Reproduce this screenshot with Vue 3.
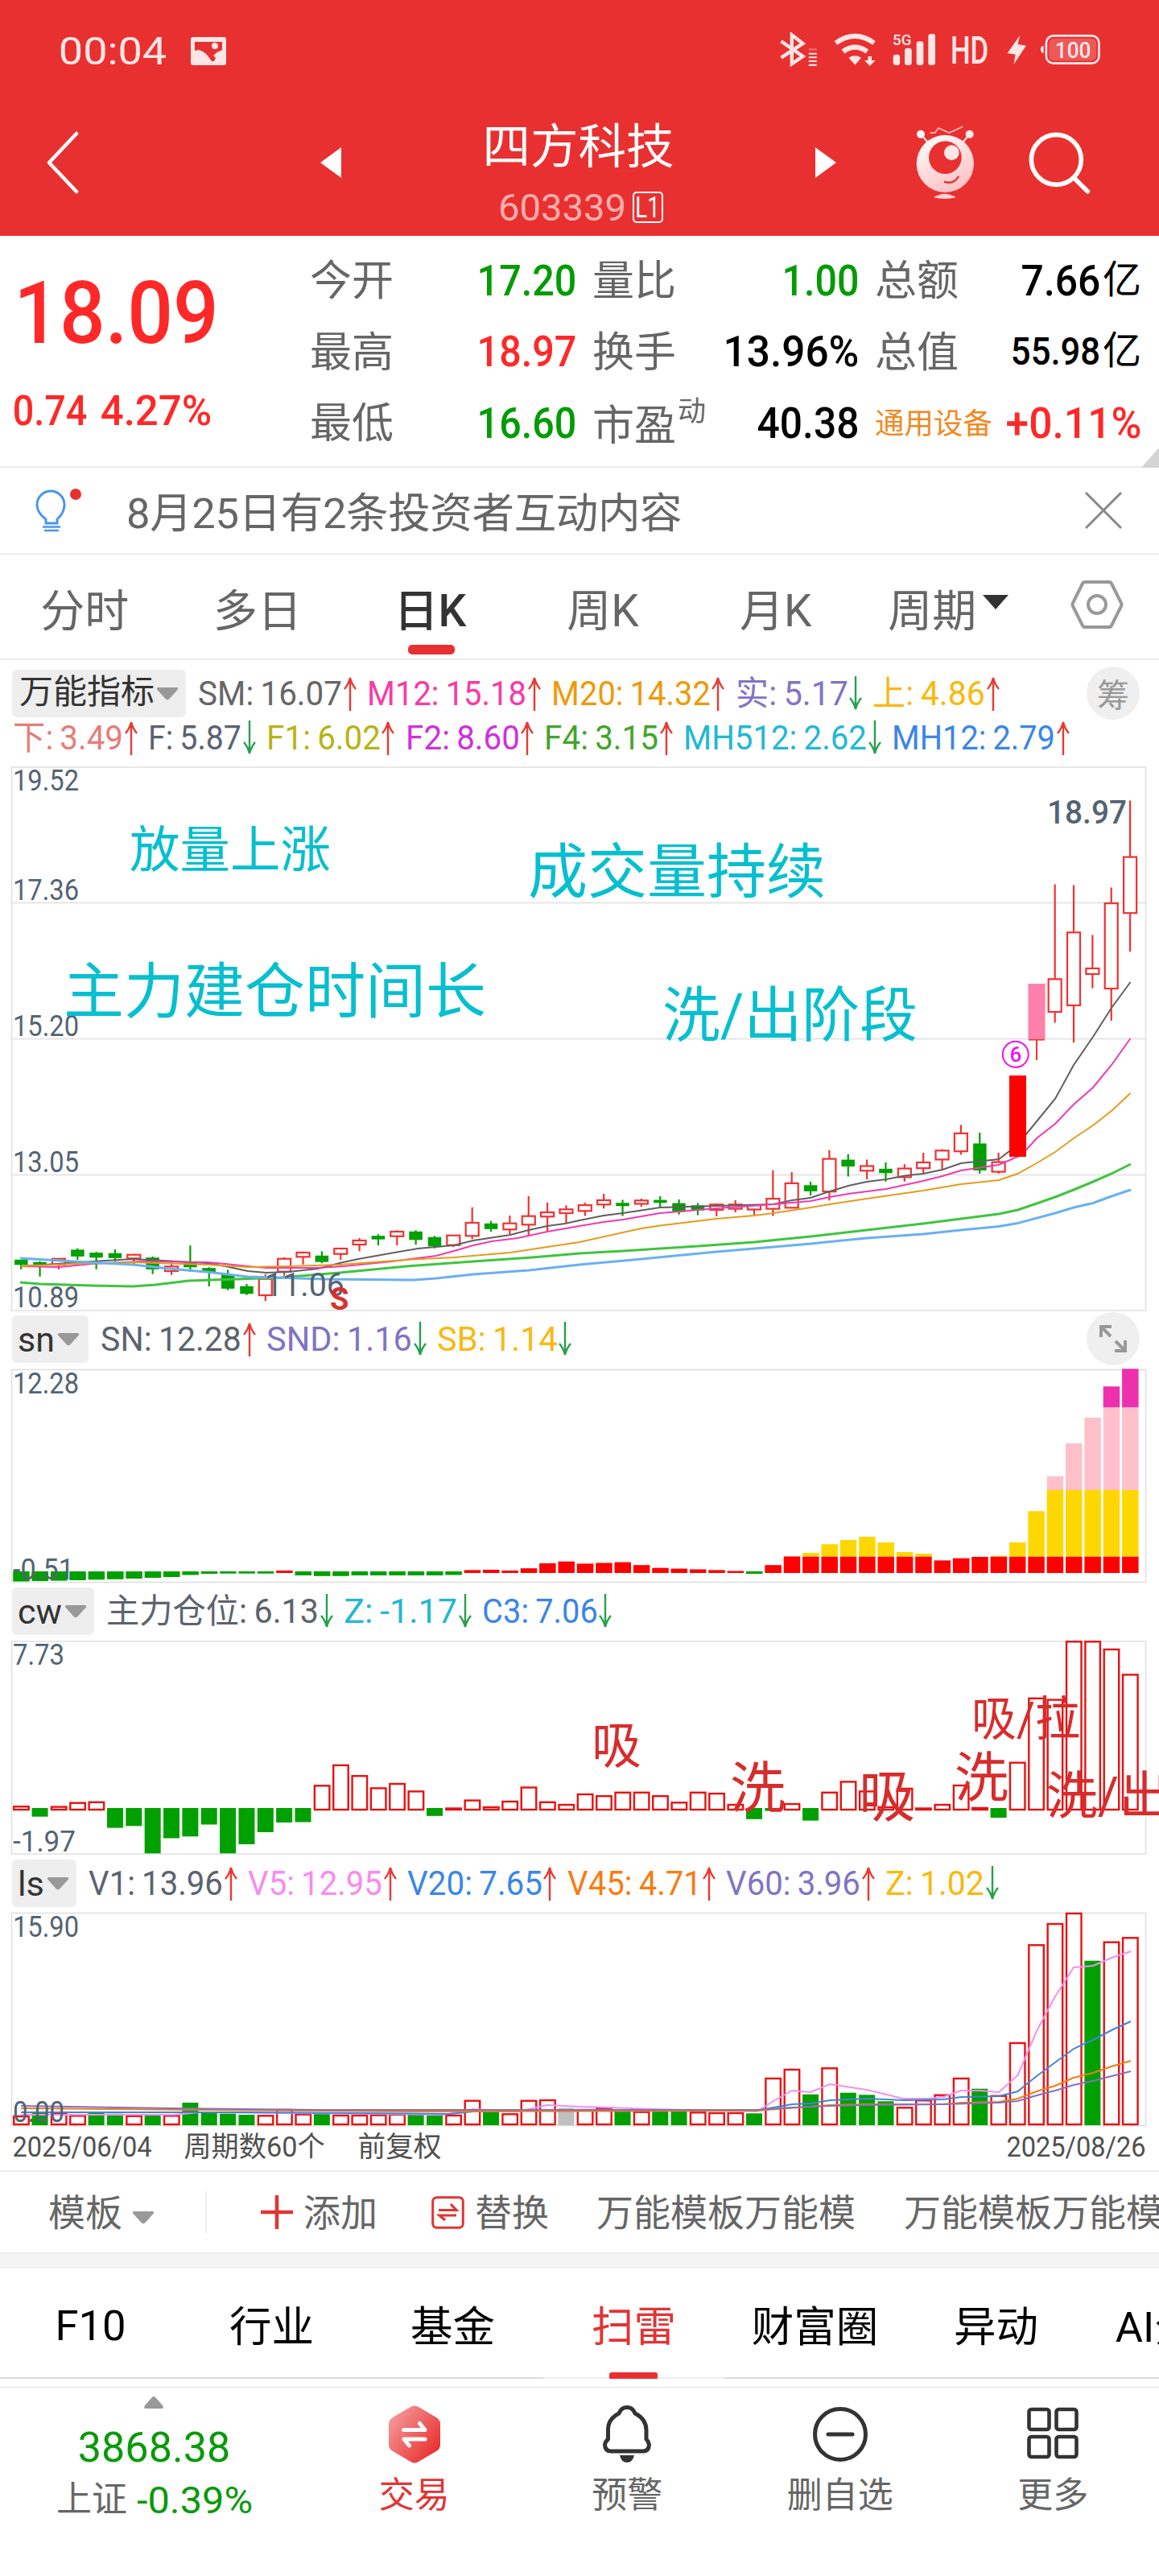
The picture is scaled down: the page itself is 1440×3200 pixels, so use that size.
<script setup>
import { h } from 'vue'

// Single-line label stretched to a fixed width; its box is exactly cap-height tall.
const Fit = ({ t, w, s, b = 400, cap = 0.711 }) =>
  h('svg', { width: w, height: s * cap, style: 'overflow:visible;display:block;flex:none' }, [
    h('text', {
      x: -0.045 * s, y: s * cap, 'font-size': s, 'font-weight': b, fill: 'currentColor',
      textLength: w + 0.09 * s, lengthAdjust: 'spacingAndGlyphs'
    }, t)
  ])
Fit.props = ['t', 'w', 's', 'b', 'cap']

const Caret = () =>
  h('svg', { width: 28, height: 17, viewBox: '0 0 28 17', style: 'display:block;flex:none' }, [
    h('path', { d: 'M2 1 H26 Q28 2 26.500 4 L16 15.500 Q14 17 12 15.500 L1.500 4 Q0 2 2 1Z', fill: '#999' })
  ])

const Arrow = ({ up }) =>
  h('svg', { width: 18, height: 43, viewBox: '0 0 18 43', style: 'display:block;flex:none' }, [
    h('path', {
      d: up ? 'M9 43 V2 M2 16 Q7 10 9 2 Q11 10 16 16' : 'M9 0 V41 M2 27 Q7 33 9 41 Q11 33 16 27',
      fill: 'none', stroke: up ? '#e63a35' : '#26a04c', 'stroke-width': 2.4
    })
  ])
Arrow.props = ['up']

const quotes = [
  { k: '今开', v: '17.20', w: 119, c: 'g' }, { k: '量比', v: '1.00', w: 91, c: 'g' }, { k: '总额', v: '7.66', w: 94, c: 'k', u: '亿' },
  { k: '最高', v: '18.97', w: 119, c: 'r' }, { k: '换手', v: '13.96%', w: 164, c: 'k' }, { k: '总值', v: '55.98', w: 107, c: 'k', u: '亿', s: 48 },
  { k: '最低', v: '16.60', w: 119, c: 'g' }, { k: '市盈', sup: '动', v: '40.38', w: 122, c: 'k' }, { k: '通用设备', v: '+0.11%', w: 164, c: 'r', hot: true }
]

// Indicator readouts: a thin space separates the name from its value
const gap = (list) => list.map((l) => ({ ...l, t: l.t.replace(': ', ':\u2009') }))
const legendA = gap([
  { t: 'SM: 16.07', w: 175, c: '#666', up: true }, { t: 'M12: 15.18', w: 194, c: '#f73aa8', up: true },
  { t: 'M20: 14.32', w: 194, c: '#ee9a0a', up: true }, { t: '实: 5.17', w: 136, c: '#8074c4' }, { t: '上: 4.86', w: 136, c: '#f9b90f', up: true }
])
const legendB = gap([
  { t: '下: 3.49', w: 133, c: '#e57d7a', up: true }, { t: 'F: 5.87', w: 112, c: '#5a6270' },
  { t: 'F1: 6.02', w: 138, c: '#b8b315', up: true }, { t: 'F2: 8.60', w: 138, c: '#cf30dc', up: true },
  { t: 'F4: 3.15', w: 138, c: '#43a52a', up: true }, { t: 'MH512: 2.62', w: 224, c: '#22b8d4' }, { t: 'MH12: 2.79', w: 199, c: '#3a86e8', up: true }
])
const legendSn = gap([
  { t: 'SN: 12.28', w: 171, c: '#5c636e', up: true }, { t: 'SND: 1.16', w: 177, c: '#8074c4' }, { t: 'SB: 1.14', w: 146, c: '#f9b90f' }
])
const legendCw = gap([
  { t: '主力仓位: 6.13', w: 260, c: '#5c636e' }, { t: 'Z: -1.17', w: 137, c: '#22b8d4' }, { t: 'C3: 7.06', w: 140, c: '#3a86e8' }
])
const legendLs = gap([
  { t: 'V1: 13.96', w: 163, c: '#5c636e', up: true }, { t: 'V5: 12.95', w: 163, c: '#f98bef', up: true },
  { t: 'V20: 7.65', w: 164, c: '#3a86e8', up: true }, { t: 'V45: 4.71', w: 163, c: '#f97b10', up: true },
  { t: 'V60: 3.96', w: 163, c: '#8074c4', up: true }, { t: 'Z: 1.02', w: 119, c: '#f9b90f' }
])

const cx = (i) => 26.2 + 23.354 * i

// Candles: [rising, high, body top, body bottom, low]
const candles = [
  [0, 1565, 1565, 1571, 1576.7], [0, 1566.7, 1568, 1570.7, 1585.7], [1, 1563.3, 1563.7, 1571, 1576.7], [0, 1550.7, 1552.7, 1560.7, 1565],
  [0, 1555, 1556.3, 1562, 1576.7], [0, 1552, 1557, 1562.7, 1566.7], [1, 1557.7, 1558.7, 1563.3, 1570.7], [0, 1560.7, 1562.3, 1576.7, 1582.7],
  [1, 1566.7, 1573.3, 1579, 1583.7], [0, 1547.3, 1568.7, 1574, 1580], [0, 1574, 1575.3, 1580.7, 1598], [0, 1577.3, 1583.3, 1600.7, 1602.7],
  [0, 1595, 1598, 1607, 1608.7], [1, 1582.7, 1588.7, 1609, 1616], [1, 1562, 1563.7, 1579.7, 1584.7], [1, 1554.7, 1556, 1561.3, 1570.7],
  [0, 1554.3, 1560, 1567.3, 1569.3], [1, 1550, 1551, 1557.7, 1565], [1, 1538, 1541, 1546, 1554.3], [0, 1533.3, 1535.3, 1539.3, 1547],
  [1, 1528.3, 1530, 1535.7, 1547], [0, 1528.3, 1530, 1540, 1546.3], [0, 1535.3, 1537, 1548, 1550.7], [1, 1534.3, 1534.7, 1546.7, 1549.3],
  [1, 1499.7, 1519, 1535.3, 1539.3], [0, 1516.7, 1520, 1526.7, 1530], [1, 1510, 1519.7, 1527.3, 1533.3], [1, 1486, 1510.7, 1521.3, 1534],
  [1, 1494, 1506, 1511.3, 1529.3], [1, 1497.3, 1502.3, 1507, 1519.3], [1, 1494, 1497.1, 1504.3, 1510.5], [1, 1482.9, 1490.9, 1496.3, 1501.2],
  [0, 1490.4, 1494.5, 1498, 1510.5], [1, 1489.1, 1491.3, 1495.4, 1498.9], [0, 1486, 1490.9, 1494, 1500.3], [0, 1490, 1494.9, 1505.2, 1508.8],
  [0, 1494.5, 1497.6, 1503.4, 1509.6], [1, 1494.9, 1496.3, 1502.9, 1511], [1, 1490.9, 1496.3, 1501.6, 1506.1], [1, 1496.3, 1497.1, 1502.5, 1509.2],
  [1, 1453.8, 1489.1, 1501.6, 1510.5], [1, 1456.1, 1469.9, 1500.3, 1500.3], [0, 1468.1, 1472.6, 1479.7, 1485.1], [1, 1428.8, 1439.6, 1480.2, 1491.3],
  [0, 1433.8, 1440.9, 1448.9, 1461.4], [1, 1440.4, 1448.5, 1454.3, 1465], [0, 1444, 1452.1, 1457, 1467.7], [1, 1446.3, 1451.6, 1462.3, 1467.7],
  [1, 1432, 1444, 1451.2, 1457], [1, 1427.5, 1429.3, 1440.4, 1453], [1, 1397.6, 1407.9, 1430.2, 1434.6], [0, 1407, 1420.8, 1453.8, 1457.9],
  [1, 1432, 1443.6, 1455.6, 1457.9], [2, 1336, 1336, 1436.5, 1436.5], [3, 1222, 1222, 1290.5, 1316.8], [1, 1098.5, 1216.3, 1257, 1270.4],
  [1, 1099.4, 1158.3, 1248.9, 1294.9], [1, 1161.4, 1203, 1210, 1227.5], [1, 1102.5, 1122.1, 1228, 1268.1], [1, 994.5, 1064.6, 1134.2, 1182]
].map(([k, hi, t, b, lo], i) => ({ k, hi, t, b, lo, x: cx(i) }))

const mainLines = [
  { c: '#606060', w: 2, p: '26,1573 115,1567 165,1564 202,1566 257,1569 280,1573 308,1579 331,1581 358,1580 395,1576 422,1569 445,1564 519,1551 564,1547 588,1541 634,1534 657,1528 680,1523 702,1520 720,1516 750,1510 774,1507 820,1500 890,1498 961,1496 984,1491 1007,1488 1031,1480 1054,1473 1077,1468 1101,1465 1124,1460.5 1147,1458 1171,1453 1194,1445 1241,1440 1264.5,1422 1288,1393 1311,1365 1334,1323 1358,1288 1381,1252 1404.500,1220' },
  { c: '#f03ab0', w: 2, p: '26,1573 73,1574 115,1570 174,1567 257,1568 280,1570 308,1573 331,1575 395,1575 427,1573 487,1567 542,1560 564,1554 588,1547 611,1542 643,1538 680,1530 720,1523 750,1518 774,1515 797,1511 820,1507 890,1501 961,1496 1007,1492 1031,1487 1054,1483 1101,1477 1124,1472 1147,1467 1171,1461 1194,1454 1241,1447 1269,1435 1288,1414 1311,1396 1334,1372 1358,1351 1381,1323 1404.500,1290' },
  { c: '#e59c1c', w: 2, p: '26,1573 92,1570 165,1568 257,1571 308,1574 358,1573 422,1571 505,1565 564,1562 634,1556 680,1549 720,1543 774,1531 797,1526 820,1522.6 890,1514 937,1510 961,1507 1007,1500 1031,1496 1077,1489 1147,1479 1194,1471 1241,1466 1264.5,1458 1288,1445 1311,1431 1334,1414 1358,1398 1381,1380 1404.500,1358' },
  { c: '#3fc43f', w: 3, p: '25,1593 50,1595 115,1597 165,1598 193,1596 234,1591 294,1589 349,1587 422,1581 505,1573 588,1567 661,1562 720,1557 774,1554 820,1551 867,1548 937,1543 1007,1536 1077,1528 1147,1520 1194,1514 1241,1508 1264.5,1503 1288,1495 1311,1487 1334,1478 1358,1468 1381,1458 1405,1446' },
  { c: '#6ab0f2', w: 3, p: '25,1563 92,1567 165,1571 211,1576 257,1580 308,1586 340,1587 404,1589 514,1590 542,1588 588,1583 657,1578 720,1571 797,1564 890,1555 961,1549 1007,1545 1077,1538 1147,1533 1194,1528 1241,1523.5 1264.5,1519.5 1311,1507 1334,1500 1358,1494.5 1381,1486 1405,1478' }
]
const axis = [['19.52', 982], ['17.36', 1117.5], ['15.20', 1287], ['13.05', 1455.5], ['10.89', 1624]]
const notes = [
  { t: '放量上涨', x: 161, y: 1078, s: 62.5, w: 250 }, { t: '成交量持续', x: 656, y: 1109, s: 74, w: 370 },
  { t: '主力建仓时间长', x: 79, y: 1258, s: 75, w: 525 }, { t: '洗/出阶段', x: 823, y: 1287, s: 73.5, w: 317 }
]

// Stacked bars: each tier is capped at a fixed level
const tiers = [[0, 20.5, '#ff0000'], [20.5, 103, '#ffd700'], [103, 205.8, '#ffc0cb'], [205.8, 999, '#ee2fae']]
const sn = [
  -12.5, -12, -11.6, -11, -10.3, -9.8, -9, -8, -7, -4.5, -3, -2.7, -2.7, -2.7, 3, -5, -5.8, -5.8, -5, -5, -5, -5, -5, -4.5, 3.6, 4, 3, 5.8, 12, 14.3,
  11.6, 12.5, 13.4, 9.8, 6.3, 5.4, 4.5, 3.6, 2.5, -3, 9.8, 20.5, 25, 35.7, 41, 45, 38, 26, 24, 15.6, 18.3, 20, 21.4, 38, 76.8, 120, 161, 193, 231.7, 253.6
]
const snRects = sn.flatMap((v, i) => {
  const x = cx(i) - 10
  if (v < 0) return [{ x, y: 1952, h: -v, c: '#00a000' }]
  return tiers.filter(([a]) => v > a).map(([a, b, c]) => ({ x, y: 1954 - Math.min(v, b), h: Math.min(v, b) - a, c }))
})

const cw = [
  5.8, -10.7, 5.4, 10.3, 11.2, -24.6, -22.3, -56.3, -37.5, -35.3, -20.5, -56.3, -45, -30, -18, -17.5, 31.7, 57.1, 43.8, 28.6,
  34, 24.6, -9.8, 3.5, 13.4, 5, 12, 29.5, 11.2, 8, 21, 18.8, 23.2, 23.2, 18.8, 10.7, 23.2, 21.9, 8, -13.8,
  -3.6, 9, -15.6, 23.2, 36.6, 24.6, 5, 28.1, 3.5, 8, 32, 4, -12, 60.3, 140.2, 138.4, 210.7, 210.7, 201, 169.6
]
const cwNotes = [
  { t: '吸', x: 735, y: 2191, s: 62, w: 62 }, { t: '洗', x: 907, y: 2246, s: 69, w: 69 }, { t: '吸', x: 1067, y: 2257, s: 70, w: 70 },
  { t: '洗', x: 1186, y: 2232, s: 67, w: 67 }, { t: '吸/拉', x: 1207, y: 2156, s: 59, w: 135 }, { t: '洗/出', x: 1300, y: 2253, s: 64, w: 154 }
]

const ls = [
  12, -15.7, 15, 12.7, -16.7, -14.3, 12.3, -13, 12.7, -28, -15.7, -14.3, -13, 12.7, 20, 14.3, -14.3, 13, 13, 13.3,
  14, -15, -12, 13, 31.3, -16.7, 14.7, 31.3, 32, 0, 20, 22.3, -18.3, 17.3, -19, -19, 16.7, 16, 16, -14.7,
  59, 70, -38.3, 71.7, -40.3, -37.7, -29.7, 22.7, 31.7, 38.3, 59, -45.3, 37.3, 103, 224.7, 251, 264, -204.3, 228.3, 233.7
]
const lsLines = [
  { c: '#f28ff0', p: '26,2627 216,2627 248,2624 551,2627 588,2620 643,2623 680,2615 720,2617 757,2618 812,2620 940,2623 961,2610 984,2597 1007,2599 1031,2589 1077,2596 1122,2607 1152,2607 1172,2605 1194,2597 1218,2597 1241,2599 1264.5,2578 1288,2523 1311,2480 1334,2444 1358,2442 1381,2432 1405,2424' },
  { c: '#3f86d8', p: '26,2624 300,2624 560,2626 588,2623 720,2621 940,2622 961,2618 984,2614 1007,2613 1031,2609 1077,2607 1124,2609 1171,2608 1194,2605 1241,2604 1264.5,2598 1288,2579 1311,2562 1334,2545 1358,2534 1381,2522 1405,2511' },
  { c: '#ee7d1a', p: '26,2619 250,2621 520,2623 940,2622 1031,2615 1077,2614 1171,2614 1194,2612 1241,2611 1264.5,2607 1288,2598 1311,2591 1334,2581 1358,2575 1381,2567 1405,2560' },
  { c: '#8470c0', p: '26,2616 210,2619 400,2621 940,2621 984,2618 1031,2616 1077,2615 1171,2614 1241,2612 1264.5,2610 1288,2603 1311,2597 1334,2590 1358,2585 1381,2579 1405,2573' }
]
const sections = ['F10', '行业', '基金', '扫雷', '财富圈', '异动', 'AI分析']
</script>

<template>
  <div class="page">
    <header class="top">
      <div class="status">
        <Fit t="00:04" :w="130" :s="49" />
        <svg class="photo" width="44" height="35" viewBox="0 0 44 35">
          <path fill-rule="evenodd" fill="#ffe6e6" d="M3 0H41Q44 0 44 3V32Q44 35 41 35H3Q0 35 0 32V3Q0 0 3 0ZM5 6V17L10 16Q15 17 20 22L26 30H29L31 26L28 23Q33 18 39 16V6ZM30 7A4 4 0 1 1 30 15A4 4 0 1 1 30 7Z" />
        </svg>
        <svg class="sys" width="400" height="43.3" viewBox="85 60 1200 130" fill="#ffe6e6">
          <path d="M92 94L173 150L132 178V70L173 102L92 155" fill="none" stroke="#ffe6e6" stroke-width="13" />
          <path d="M195 137h30v6h-30zM195 151h30v6h-30zM195 165h30v6h-30zM195 179h30v7h-30z" />
          <path d="M195 121h30v6h-30z" opacity=".4" />
          <g fill="none" stroke="#ffe6e6" stroke-width="18">
            <path d="M296 100Q367 49 439 100" /><path d="M323 132Q367 100 413 132" />
          </g>
          <path d="M344 155Q367 141 391 155L368 182ZM416 150h14v15h14l-21 21l-20 -21h13z" />
          <rect x="510" y="143" width="25" height="40" rx="10" /><rect x="553" y="119" width="26" height="64" rx="10" />
          <rect x="597" y="94" width="26" height="89" rx="10" /><rect x="641" y="66" width="26" height="117" rx="10" />
          <text x="508" y="109" font-size="56" font-weight="500" textLength="70" lengthAdjust="spacingAndGlyphs">5G</text>
          <text x="724" y="176" font-size="145" font-weight="500" textLength="142" lengthAdjust="spacingAndGlyphs">HD</text>
          <path d="M983 72L936 138L966 143L960 180L1006 110L975 105Z" />
          <path d="M1071 110V139Q1060 136 1060 124T1071 110Z" />
          <rect x="1081" y="73" width="197" height="103" rx="27" fill="none" stroke="#ffe6e6" stroke-width="8" />
          <rect x="1091" y="83" width="177" height="83" rx="18" opacity=".22" />
          <text x="1114" y="156" font-size="84" font-weight="500" textLength="134" lengthAdjust="spacingAndGlyphs">100</text>
        </svg>
      </div>
      <div class="nav">
        <svg class="back" width="42" height="78" viewBox="0 0 42 78"><path d="M38 3L4 39L38 75" fill="none" stroke="#fff" stroke-width="4.500" stroke-linecap="round" stroke-linejoin="round" /></svg>
        <svg class="prev" width="26" height="38" viewBox="0 0 26 38"><path d="M26 0V38L0 19Z" fill="#fff" /></svg>
        <div class="title">
          <div class="name">四方科技</div>
          <div class="code"><Fit t="603339" :w="155" :s="46" /><span class="lv"><Fit t="L1" :w="27" :s="37" /></span></div>
        </div>
        <svg width="26" height="38" viewBox="0 0 26 38"><path d="M0 0V38L26 19Z" fill="#fff" /></svg>
        <svg class="robot" width="75" height="93.3" viewBox="590 405 225 280">
          <defs><linearGradient id="rb" x1="0" y1="0" x2=".5" y2="1"><stop offset="0" stop-color="#fff" /><stop offset="1" stop-color="#ffc4c6" /></linearGradient></defs>
          <g fill="none" stroke="#ffe3e3" stroke-width="7"><path d="M612 441L640 474M792 441L765 474" /><path d="M645 435H664L677 417L717 435L768 412" stroke-width="5" stroke="#ffc2c2" /></g>
          <circle cx="611" cy="440" r="15" fill="#fff" /><circle cx="793" cy="440" r="15" fill="#ffe9e9" />
          <circle cx="702" cy="550" r="107" fill="url(#rb)" />
          <circle cx="702" cy="527" r="61" fill="#e93030" /><circle cx="726" cy="509" r="28" fill="#ffe6e6" />
          <path d="M698 618Q736 628 752 597" fill="none" stroke="#e93030" stroke-width="7" />
          <path d="M659 676Q700 648 742 676Q700 686 659 676Z" fill="#ffd0d0" />
        </svg>
        <svg class="search" width="80" height="80" viewBox="1010 425 240 240"><g fill="none" stroke="#fff"><circle cx="1116" cy="534" r="93" stroke-width="17" /><path d="M1182 602L1233 652" stroke-width="17" stroke-linecap="round" /></g></svg>
      </div>
    </header>

    <section class="quote">
      <div class="price">
        <Fit t="18.09" :w="245" :s="107" :b="500" />
        <div class="chg"><Fit t="0.74" :w="88" :s="52" :b="500" /><Fit t="4.27%" :w="134" :s="52" :b="500" /></div>
      </div>
      <div class="grid">
        <div v-for="q in quotes" :key="q.k" class="cell">
          <span class="k" :class="{ hot: q.hot }">{{ q.k }}<sup v-if="q.sup">{{ q.sup }}</sup></span>
          <span class="v" :class="q.c"><Fit :t="q.v" :w="q.w" :s="q.s || 53" :b="500" /><i v-if="q.u">{{ q.u }}</i></span>
        </div>
      </div>
      <svg class="corner" width="22" height="25" viewBox="0 0 22 25"><path d="M22 0V25H0Z" fill="#d4d4d4" /></svg>
    </section>

    <section class="notice">
      <svg width="60" height="56" viewBox="0 0 60 56">
        <path d="M14 44V39Q3 31 3 21A17 17 0 0 1 37 21Q37 31 28 39V44Z" fill="none" stroke="#4a94ee" stroke-width="3" />
        <path d="M10 48.500H32M12 53H30" stroke="#4a94ee" stroke-width="2.500" /><circle cx="51" cy="8" r="7" fill="#e8302f" />
      </svg>
      <p>8月25日有2条投资者互动内容</p>
      <svg class="close" width="46" height="46" viewBox="0 0 46 46"><path d="M1 1L45 45M45 1L1 45" stroke="#888" stroke-width="3" /></svg>
    </section>

    <nav class="periods">
      <span>分时</span><span>多日</span><span class="on">日K</span><span>周K</span><span>月K</span>
      <span>周期<svg width="32" height="18" viewBox="0 0 32 18"><path d="M0 0H32L16 18Z" fill="#333" /></svg></span>
      <svg class="gear" width="66" height="62" viewBox="0 0 66 62"><g fill="none" stroke="#999" stroke-width="4"><path d="M18 3H48Q50 3 51 5L63 29Q64 31 63 33L51 57Q50 59 48 59H18Q16 59 15 57L3 33Q2 31 3 29L15 5Q16 3 18 3Z" /><circle cx="33" cy="31" r="11" /></g></svg>
    </nav>

    <section class="legend main">
      <div class="row">
        <span class="badge">万能指标<Caret /></span>
        <span v-for="l in legendA" :key="l.t" class="item" :style="{ color: l.c }"><Fit :t="l.t" :w="l.w" :s="42" /><Arrow :up="l.up" /></span>
        <span class="round">筹</span>
      </div>
      <div class="row second">
        <span v-for="l in legendB" :key="l.t" class="item" :style="{ color: l.c }"><Fit :t="l.t" :w="l.w" :s="42" /><Arrow :up="l.up" /></span>
      </div>
    </section>

    <svg class="chart" width="1440" height="678" viewBox="0 952 1440 678">
      <g fill="none" stroke="#dfdfdf" stroke-width="1.500"><rect x="14.500" y="953" width="1409" height="675" /><path d="M14 1121.500H1424M14 1290.500H1424M14 1459.500H1424" /></g>
      <g v-for="c in candles" :key="c.x">
        <template v-if="c.k < 2">
          <path :d="`M${c.x} ${c.hi}V${c.t}M${c.x} ${c.b}V${c.lo}`" :stroke="c.k ? '#ee3333' : '#00a000'" stroke-width="2.200" />
          <rect :x="c.x - 8" :y="c.t" width="16" :height="Math.max(c.b - c.t, 1)" :fill="c.k ? '#fff' : '#00a000'" :stroke="c.k ? '#ee3333' : '#00a000'" :stroke-width="c.k ? 2.2 : 0.5" />
        </template>
      </g>
      <polyline v-for="l in mainLines" :key="l.c" :points="l.p" fill="none" :stroke="l.c" :stroke-width="l.w" />
      <rect x="1254" y="1336" width="21" height="101" fill="#ff0000" />
      <path d="M1288 1290V1317M1278 1291.500H1298" stroke="#ee3333" stroke-width="2" /><rect x="1277.500" y="1222" width="21" height="69" fill="#ff80aa" />
      <circle cx="1261.800" cy="1309.800" r="16" fill="none" stroke="#ee11ee" stroke-width="2" /><text x="1261.800" y="1319" font-size="26" text-anchor="middle" font-weight="500" fill="#ee11ee">6</text>
      <g fill="#536473">
        <text v-for="a in axis" :key="a[0]" x="16" :y="a[1]" font-size="36" textLength="82" lengthAdjust="spacingAndGlyphs">{{ a[0] }}</text>
        <text x="1301" y="1023" font-size="41" font-weight="500" textLength="99" lengthAdjust="spacingAndGlyphs">18.97</text>
        <text x="329" y="1610" font-size="41" textLength="99" lengthAdjust="spacingAndGlyphs">11.06</text>
      </g>
      <text x="410" y="1627" font-size="38" font-weight="700" fill="#d93030">S</text>
      <text v-for="n in notes" :key="n.t" :x="n.x" :y="n.y" :font-size="n.s" :textLength="n.w" lengthAdjust="spacingAndGlyphs" fill="#06bfcf">{{ n.t }}</text>
    </svg>

    <div class="legend sub">
      <span class="badge w1"><Fit class="en" t="sn" :w="42" :s="43" /><Caret /></span>
      <span v-for="l in legendSn" :key="l.t" class="item" :style="{ color: l.c }"><Fit :t="l.t" :w="l.w" :s="42" /><Arrow :up="l.up" /></span>
      <span class="round"><svg width="34" height="34" viewBox="0 0 34 34"><path d="M2 15V2H15M3 3L14 14M32 19V32H19M31 31L20 20" fill="none" stroke="#999" stroke-width="4" /></svg></span>
    </div>
    <svg class="chart" width="1440" height="270" viewBox="0 1698 1440 270">
      <rect x="14.500" y="1701.500" width="1409" height="264" fill="none" stroke="#dfdfdf" stroke-width="1.500" />
      <rect v-for="(r, i) in snRects" :key="i" :x="r.x" :y="r.y" width="20.500" :height="r.h" :fill="r.c" />
      <g fill="#536473"><text x="16" y="1731" font-size="36" textLength="82" lengthAdjust="spacingAndGlyphs">12.28</text><text x="16" y="1962" font-size="36" textLength="76" lengthAdjust="spacingAndGlyphs">-0.51</text></g>
    </svg>

    <div class="legend sub">
      <span class="badge w2"><Fit class="en" t="cw" :w="51" :s="43" /><Caret /></span>
      <span v-for="l in legendCw" :key="l.t" class="item" :style="{ color: l.c }"><Fit :t="l.t" :w="l.w" :s="42" /><Arrow :up="l.up" /></span>
    </div>
    <svg class="chart" width="1440" height="270" viewBox="0 2036 1440 270">
      <rect x="14.500" y="2039" width="1409" height="264" fill="none" stroke="#dfdfdf" stroke-width="1.500" />
      <template v-for="(v, i) in cw" :key="i">
        <rect v-if="v < 0" :x="cx(i) - 10" y="2246" width="20" :height="-v" fill="#00a000" />
        <rect v-else :x="cx(i) - 9" :y="2250 - v" width="18.500" :height="v - 2" fill="#fff" stroke="#e81111" stroke-width="2.400" />
      </template>
      <g fill="#536473"><text x="16" y="2068" font-size="36" textLength="64" lengthAdjust="spacingAndGlyphs">7.73</text><text x="16" y="2300" font-size="36" textLength="78" lengthAdjust="spacingAndGlyphs">-1.97</text></g>
      <text v-for="n in cwNotes" :key="n.x" :x="n.x" :y="n.y" :font-size="n.s" :textLength="n.w" lengthAdjust="spacingAndGlyphs" fill="#d82c2c">{{ n.t }}</text>
    </svg>

    <div class="legend sub">
      <span class="badge w3"><Fit class="en" t="ls" :w="29" :s="43" /><Caret /></span>
      <span v-for="l in legendLs" :key="l.t" class="item" :style="{ color: l.c }"><Fit :t="l.t" :w="l.w" :s="42" /><Arrow :up="l.up" /></span>
    </div>
    <svg class="chart" width="1440" height="270" viewBox="0 2374 1440 270">
      <rect x="14.500" y="2376.500" width="1409" height="264" fill="none" stroke="#dfdfdf" stroke-width="1.500" />
      <template v-for="(v, i) in ls" :key="i">
        <rect v-if="v === 0" :x="cx(i) - 10" y="2618.500" width="20" height="21.500" fill="#c0c0c0" />
        <rect v-else-if="v < 0" :x="cx(i) - 10" :y="2640 + v" width="20" :height="-v" fill="#00a000" />
        <rect v-else :x="cx(i) - 9" :y="2641 - v" width="18.500" :height="v - 2" fill="#fff" stroke="#e81111" stroke-width="2.400" />
      </template>
      <polyline v-for="l in lsLines" :key="l.c" :points="l.p" fill="none" :stroke="l.c" stroke-width="2" />
      <g fill="#536473"><text x="16" y="2406" font-size="36" textLength="82" lengthAdjust="spacingAndGlyphs">15.90</text><text x="16" y="2636" font-size="36" textLength="64" lengthAdjust="spacingAndGlyphs">0.00</text></g>
    </svg>

    <div class="dates">
      <Fit t="2025/06/04" :w="170" :s="35" /><Fit class="d2" t="周期数60个" :w="172" :s="35" /><Fit class="d3" t="前复权" :w="101" :s="35" /><Fit class="d4" t="2025/08/26" :w="170" :s="35" />
    </div>

    <div class="templates">
      <span>模板</span><Caret class="tc" /><i class="bar"></i>
      <svg class="plus" width="40" height="42" viewBox="0 0 40 42"><path d="M20 0V42M0 21H40" stroke="#e23434" stroke-width="4.500" /></svg><span>添加</span>
      <svg class="swap" width="41" height="41" viewBox="0 0 41 41"><g fill="none" stroke="#e23434"><rect x="1.700" y="1.700" width="37.600" height="37.600" rx="5" stroke-width="3" /><path d="M9 17.500H31L24 10M31 24H10L17 30" stroke-width="3.200" /></g></svg><span>替换</span>
      <span class="t1">万能模板万能模</span><span class="t2">万能模板万能模</span>
    </div>
    <div class="band"></div>

    <nav class="sections">
      <span v-for="s in sections" :key="s" :class="{ on: s === '扫雷', latin: s === 'F10' }">{{ s }}</span>
    </nav>

    <footer class="dock">
      <div class="index">
        <svg width="26" height="15" viewBox="0 0 26 15"><path d="M13 0Q14 0 15 1L24 11Q26 15 23 15H3Q0 15 2 11L11 1Q12 0 13 0Z" fill="#999" /></svg>
        <Fit class="num" t="3868.38" :w="185" :s="52" />
        <div class="sh"><span>上证</span><Fit t="-0.39%" :w="140" :s="46" /></div>
      </div>
      <div class="act red">
        <svg width="64" height="72" viewBox="0 0 64 72">
          <defs><linearGradient id="hx" x1="0" y1=".1" x2="1" y2=".9"><stop offset="0" stop-color="#f5a0a0" /><stop offset="1" stop-color="#e92626" /></linearGradient></defs>
          <path d="M27 2Q32 -1 37 2L59 15Q64 18 64 23V49Q64 54 59 57L37 70Q32 73 27 70L5 57Q0 54 0 49V23Q0 18 5 15Z" fill="url(#hx)" />
          <path d="M18.500 30.500H45L38.500 22.500M45 42H19L25.500 50" fill="none" stroke="#fff" stroke-width="5" stroke-linecap="round" stroke-linejoin="round" />
        </svg><span>交易</span>
      </div>
      <div class="act">
        <svg width="60" height="72" viewBox="0 0 60 72"><path d="M20 10Q23 2.500 30 2.500T40 10Q54 17 54 31V42Q57 45 57.500 49Q57 57 50 57H10Q3 57 2.500 49Q3 45 6.500 42V31Q6 17 20 10Z" fill="none" stroke="#333" stroke-width="5" stroke-linejoin="round" /><path d="M21 62H39Q37 71 30 71T21 62Z" fill="#333" /></svg><span>预警</span>
      </div>
      <div class="act">
        <svg width="68" height="72" viewBox="0 0 68 72"><g fill="none" stroke="#333" stroke-width="5"><circle cx="34" cy="36" r="31.500" /><path d="M19 36H49" stroke-linecap="round" /></g></svg><span>删自选</span>
      </div>
      <div class="act">
        <svg width="64" height="72" viewBox="0 0 64 72"><g fill="none" stroke="#333" stroke-width="4.600"><rect x="2.500" y="5" width="25" height="25" rx="3" /><rect x="36.500" y="5" width="25" height="25" rx="3" /><rect x="2.500" y="39" width="25" height="25" rx="3" /><rect x="36.500" y="39" width="25" height="25" rx="3" /></g></svg><span>更多</span>
      </div>
    </footer>
  </div>
</template>

<style>
body { margin: 0; background: #fff; }
</style>
<style scoped>
.page { width: 1440px; height: 3200px; overflow: hidden; background: #fff; font-family: Roboto, "Noto Sans CJK SC", sans-serif; color: #666; }
.page * { box-sizing: border-box; }
svg { display: block; flex: none; }
i { font-style: normal; }

.top { height: 293px; background: #e93030; color: #ffe6e6; }
.status { height: 110px; padding: 40px 72px 0 75px; display: flex; align-items: flex-start; }
.status > :first-child { margin-top: 5px; }
.photo { margin: 6px 0 0 32px; }
.sys { margin-left: auto; }
.nav { height: 183px; display: flex; align-items: center; padding-left: 57px; }
.prev { margin-left: 299px; }
.title { width: 589px; height: 183px; padding-top: 43px; display: flex; flex-direction: column; align-items: center; }
.name { font-size: 59.500px; line-height: 60px; color: #fff; }
.code { height: 40px; margin: 24px 0 0 7px; display: flex; align-items: center; gap: 10px; color: #faaeae; }
.lv { width: 38px; height: 39px; border: 2px solid #fff; border-radius: 5px; display: flex; align-items: center; justify-content: center; color: #fff; }
.robot { margin-left: 98px; }
.search { margin-left: 65px; }

.quote { position: relative; height: 288px; display: flex; border-bottom: 2px solid #ececec; }
.price { width: 386px; padding: 57px 0 0 22px; color: #ff2828; }
.chg { display: flex; gap: 21px; margin: 65px 0 0 -4px; }
.grid { display: grid; grid-template-columns: 330px 330px 328px; grid-auto-rows: 88.5px; column-gap: 21px; padding-top: 13px; }
.cell { display: flex; justify-content: space-between; align-items: center; margin-left: -1px; padding-right: 2px; }
.cell:nth-child(3n) { padding-right: 0; }
.k { font-size: 52px; line-height: 60px; white-space: nowrap; }
.k sup { font-size: 35px; line-height: 34px; vertical-align: 24px; margin-left: 2px; }
.k.hot { font-size: 36.500px; color: #f08a24; }
.v { display: flex; align-items: center; padding-bottom: 5px; }
.v i { font-size: 48px; line-height: 50px; height: 50px; margin-left: 5px; margin-right: -2px; }
.g { color: #049c04; } .r { color: #ff2828; } .k + .v.k { font-size: inherit; color: #000; }
.corner { position: absolute; right: 0; bottom: -2px; }

.notice { height: 108px; display: flex; align-items: center; padding: 0 46px 0 43px; border-bottom: 2px solid #ececec; }
.notice p { margin: 7px 0 0 54px; font-size: 52.500px; line-height: 60px; letter-spacing: -.35px; }
.close { margin-left: auto; }

.periods { height: 131px; display: flex; align-items: center; border-bottom: 2px solid #ececec; }
.periods span { width: 214.600px; height: 131px; display: flex; align-items: center; justify-content: center; font-size: 55px; padding: 1px 4px 0 0; position: relative; }
.periods span svg { margin: -12px 0 0 8px; }
.periods .on { color: #333; font-weight: 500; }
.periods .on::after { content: ""; position: absolute; left: 78px; top: 113px; width: 58px; height: 12px; border-radius: 5px; background: #e93030; }
.gear { margin: -6px 0 0 42px; }

.legend { display: flex; }
.legend.main { flex-direction: column; height: 132px; padding-top: 12px; }
.row { height: 58px; display: flex; align-items: center; padding-right: 24px; padding-left: 15px; }
.row.second { height: 40px; margin-top: 6px; padding-left: 4px; }
.item { display: flex; align-items: center; gap: 2.500px; margin-left: 14.300px; }
.badge { width: 216px; height: 59px; border-radius: 6px; background: #eee; display: flex; align-items: center; gap: 2px; padding: 0 0 4px 9px; font-size: 42px; line-height: 55px; color: #333; flex: none; margin-right: 3px; white-space: nowrap; }
.badge svg { margin-top: 4px; }
.sub { height: 68px; align-items: center; padding: 0 24px 2px 15px; }
.badge .en { margin: 4px 3px 0 0; }
.sub .w1 { width: 95px; } .sub .w2 { width: 102px; } .sub .w3 { width: 80px; }
.round { width: 66px; height: 66px; border-radius: 50%; background: #efefef; color: #999; display: flex; align-items: center; justify-content: center; font-size: 40px; margin-left: auto; flex: none; }
.chart { overflow: hidden; }

.dates { height: 52px; display: flex; align-items: flex-start; padding: 10px 18px 0 17px; color: #505050; }
.d2 { margin-left: 43px; } .d3 { margin-left: 44px; } .d4 { margin-left: auto; }

.templates { height: 102px; border-top: 2px solid #ececec; display: flex; align-items: center; padding-left: 60px; font-size: 46px; white-space: nowrap; overflow: hidden; }
.templates span { line-height: 60px; flex: none; margin-top: 2px; }
.tc { margin: 12px 0 0 12px; }
.bar { width: 2px; height: 52px; background: #efefef; margin-left: 63px; flex: none; }
.plus { margin: 0 13px 0 67px; } .swap { margin: 0 13px 0 67px; }
.templates .t1 { margin-left: 59px; } .templates .t2 { margin-left: 60px; }
.band { height: 20px; background: #f4f4f4; border-top: 2px solid #ededed; }

.sections { height: 137px; width: 1575px; display: flex; font-size: 52.500px; color: #000; }
.sections span { width: 225px; flex: none; display: flex; align-items: center; justify-content: center; border-bottom: 2px solid #dcdcdc; white-space: nowrap; position: relative; }
.sections .latin { padding-top: 7px; }
.sections .on { color: #e23434; border-color: #ececec; }
.sections .on::after { content: ""; position: absolute; left: 82px; bottom: -2px; width: 60px; height: 8px; border-radius: 3px 3px 1px 1px; background: #e93030; }

.dock { margin-top: 9px; height: 236px; border-top: 3px solid #f1f1f1; display: flex; font-size: 44px; }
.index { width: 382px; display: flex; flex-direction: column; align-items: center; padding-top: 10px; color: #0a9a0a; }
.num { margin-top: 29px; }
.sh { display: flex; align-items: center; gap: 14px; margin-top: 17px; }
.sh span { color: #666; line-height: 60px; }
.act { width: 264.500px; display: flex; flex-direction: column; align-items: center; padding: 21px 0 0 1px; }
.act span { line-height: 60px; margin-top: 10px; }
.act.red span { color: #e23434; }
</style>
